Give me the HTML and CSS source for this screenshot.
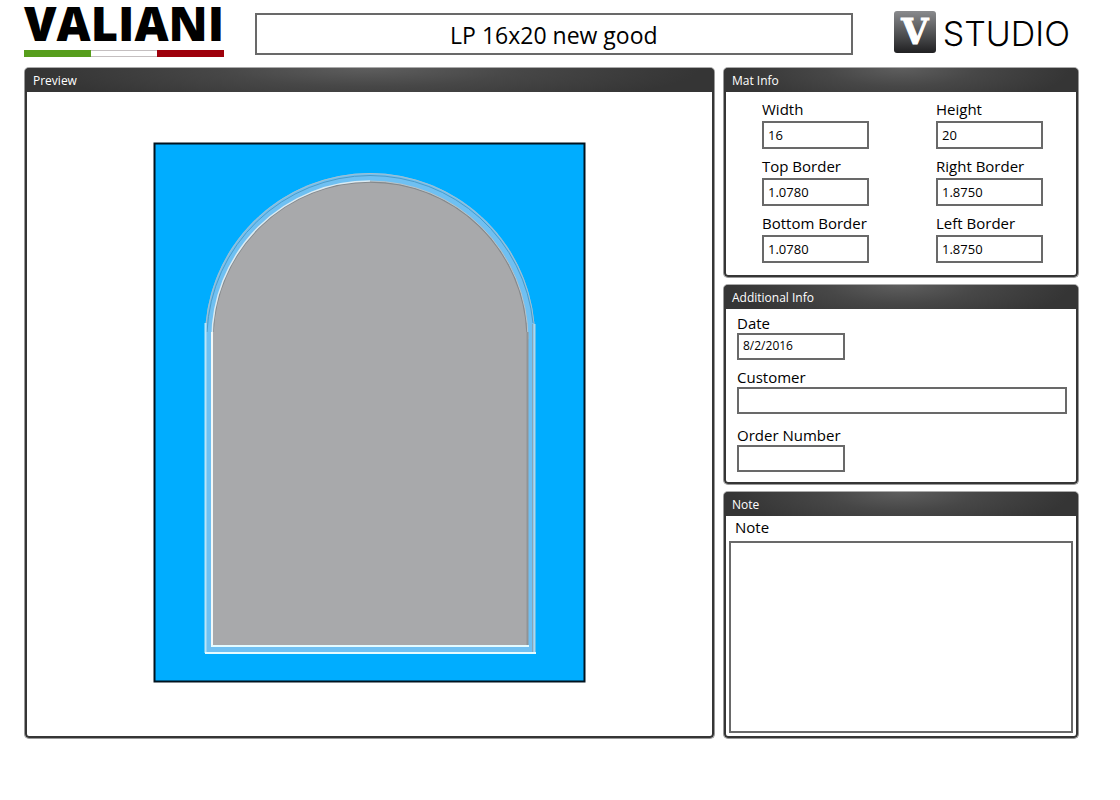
FILE: index.html
```html
<!DOCTYPE html>
<html lang="en">
<head>
<meta charset="utf-8">
<title>Valiani V Studio</title>
<link rel="stylesheet" href="styles.css">
</head>
<body>
<header class="top">
  <div class="brand">
    <div class="brand-name">VALIANI</div>
    <div class="flag"><span class="flag-green"></span><span class="flag-white"></span><span class="flag-red"></span></div>
  </div>
  <input class="box title" type="text" aria-label="Template name" value="LP 16x20 new good">
  <div class="studio"><span class="studio-tile">V</span><span class="studio-name">STUDIO</span></div>
</header>
<main class="board">
  <section class="panel">
    <h2 class="panel-head">Preview</h2>
    <div class="preview">
      <svg class="mat" viewBox="0 0 433 541" role="img" aria-label="Mat preview">
        <rect x="1.500" y="1.500" width="430" height="538" fill="#00adff" stroke="#00131f" stroke-width="2"/>
        <path d="M52 511V196A165 165 0 0 1 382 196V511Z" fill="#6fc0f2"/>
        <path d="M59 504V197A158 158 0 0 1 375 197V504Z" fill="#a8a9ab"/>
        <g fill="none">
          <path d="M53 182A165 165 0 0 1 217 31.500A165 165 0 0 1 381 182" stroke="#a3bfce"/>
          <path d="M54 190A164 164 0 0 1 217 33.500A164 164 0 0 1 380 181" stroke="#4b9bc8"/>
          <path d="M60 190A157 157 0 0 1 217 40A157 157 0 0 1 374 190" stroke="#85898c" stroke-width="1.500"/>
          <path d="M59 197A158 158 0 0 1 217 39" stroke="#dcebf2" stroke-width="1.500"/>
          <path d="M217 39A158 158 0 0 1 375 197" stroke="#b7c4cb"/>
          <path d="M52.500 181V511" stroke="#bce5f7" stroke-width="2"/>
          <path d="M59 190V504" stroke="#f2f8f8" stroke-width="2"/>
          <path d="M374.500 190V503" stroke="#909396" stroke-width="2"/>
          <path d="M379.500 182V510" stroke="#86a5b8"/>
          <path d="M381.500 182V511" stroke="#b3d5e5" stroke-width="2"/>
          <path d="M58 504H376M52 511H383" stroke="#e4fbff" stroke-width="2"/>
        </g>
      </svg>
    </div>
  </section>
  <div class="side">
    <section class="panel">
      <h2 class="panel-head">Mat Info</h2>
      <div class="mat-fields">
        <label class="field">Width<input class="box" type="text" value="16"></label>
        <label class="field">Height<input class="box" type="text" value="20"></label>
        <label class="field">Top Border<input class="box" type="text" value="1.0780"></label>
        <label class="field">Right Border<input class="box" type="text" value="1.8750"></label>
        <label class="field">Bottom Border<input class="box" type="text" value="1.0780"></label>
        <label class="field">Left Border<input class="box" type="text" value="1.8750"></label>
      </div>
    </section>
    <section class="panel">
      <h2 class="panel-head">Additional Info</h2>
      <div class="info-fields">
        <label class="field">Date<input class="box date" type="text" value="8/2/2016"></label>
        <label class="field wide">Customer<input class="box" type="text"></label>
        <label class="field order">Order Number<input class="box" type="text"></label>
      </div>
    </section>
    <section class="panel note-panel">
      <h2 class="panel-head">Note</h2>
      <label class="note">Note<textarea class="box note-text"></textarea></label>
    </section>
  </div>
</main>
</body>
</html>
```
FILE: styles.css
```css
* { box-sizing: border-box; }
body {
  margin: 0;
  padding: 7px 41px 24px 24px;
  background: #fff;
  color: #000;
  font-family: "Open Sans", "Noto Sans", sans-serif;
}
.top {
  display: flex;
  align-items: flex-start;
  margin-bottom: 10px;
  padding-right: 9px;
}
.brand { width: 200px; flex: none; }
.brand-name {
  height: 34px;
  font-size: 47px;
  font-weight: 800;
  line-height: 32px;
  white-space: nowrap;
}
.flag { display: flex; height: 7px; margin-top: 9px; }
.flag span { flex: 1; }
.flag-green { background: #579e1c; }
.flag-white { border: solid #c4bfc0; border-width: 1px 0; }
.flag-red { background: #9e000b; }
.box {
  display: block;
  width: 100%;
  height: 28px;
  margin: 0;
  padding: 0 4px;
  border: 2px solid #696969;
  border-radius: 0;
  background: #fff;
  color: #000;
  font-family: inherit;
  font-size: 13px;
}
.title {
  flex: 1;
  min-width: 0;
  height: 42px;
  margin: 6px 41px 0 31px;
  padding-top: 2px;
  font-size: 23px;
  text-align: center;
}
.studio { display: flex; align-items: flex-start; gap: 7px; margin-top: 4px; }
.studio-tile {
  width: 42px;
  height: 42px;
  border-radius: 3px;
  background: linear-gradient(#898a8d, #555658 50%, #202022);
  color: #fff;
  font: bold 35px/42px "DejaVu Serif", serif;
  -webkit-text-stroke: 1px #fff;
  text-align: center;
}
.studio-name { padding-top: 2px; font: 300 34px/42px Inter, sans-serif; }
.board {
  display: grid;
  grid-template-columns: 691fr 356fr;
  gap: 8px;
}
.side { display: flex; flex-direction: column; gap: 6px; }
.panel {
  display: flex;
  flex-direction: column;
  border: 1px solid #999;
  border-top-color: #aaa;
  border-radius: 5px;
  background: #fff;
  box-shadow: inset 0 0 0 2px #353535;
  overflow: hidden;
}
.panel-head {
  margin: 0;
  padding: 2px 8px 0;
  background: radial-gradient(ellipse 48% 170% at 50% 0, #5e5e5e, #474747 45%, #353535 100%);
  color: #fff;
  font-size: 12px;
  font-weight: 500;
  line-height: 22px;
}
.preview { flex: 1; display: grid; place-items: center; padding: 0 10px 6px; }
.mat { width: 433px; max-width: 100%; }
.mat-fields {
  display: grid;
  grid-template-columns: 107px 107px;
  justify-content: space-between;
  gap: 8px;
  padding: 8px 35px 14px 38px;
}
.field { display: block; font-size: 15px; line-height: 18px; white-space: nowrap; }
.mat-fields .box { margin-top: 3px; }
.info-fields { display: grid; gap: 8px; padding: 5px 11px 12px 13px; }
.info-fields .field { width: 108px; }
.info-fields .wide { width: 100%; }
.info-fields .order { padding-top: 4px; }
.info-fields .box { height: 27px; margin-top: 1px; }
.info-fields .date { padding-bottom: 2px; font-size: 12px; }
.note-panel { flex: 1; }
.note { display: block; padding: 2px 5px 5px; font-size: 15px; line-height: 18px; text-indent: 6px; }
.note-text { height: 192px; margin-top: 5px; resize: none; }
```
